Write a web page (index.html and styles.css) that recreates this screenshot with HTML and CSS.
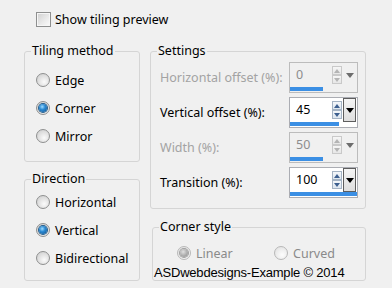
FILE: index.html
```html
<!DOCTYPE html>
<html lang="en">
<head>
    <meta charset="UTF-8">
    <title>Tiling</title>
    <link rel="stylesheet" href="styles.css">
</head>
<body>
    <div class="dialog">
        <div class="check-row"><span class="checkbox"></span>Show tiling preview</div>
        <div class="columns">
            <div class="col col-left">
                <div class="group group-tiling">
                    <div class="group-title">Tiling method</div>
                    <div class="radio-list">
                        <div class="radio-row"><span class="radio"></span>Edge</div>
                        <div class="radio-row"><span class="radio checked"></span>Corner</div>
                        <div class="radio-row"><span class="radio"></span>Mirror</div>
                    </div>
                </div>
                <div class="group group-direction">
                    <div class="group-title">Direction</div>
                    <div class="radio-list">
                        <div class="radio-row"><span class="radio"></span>Horizontal</div>
                        <div class="radio-row"><span class="radio checked"></span>Vertical</div>
                        <div class="radio-row"><span class="radio"></span>Bidirectional</div>
                    </div>
                </div>
            </div>
            <div class="col col-right">
                <div class="group group-settings">
                    <div class="group-title">Settings</div>
                    <div class="setting-list">
                        <div class="setting disabled">
                            <span class="setting-label">Horizontal offset (%):</span>
                            <div class="spin">
                                <div class="spin-top">
                                    <span class="spin-value">0</span>
                                    <span class="spin-arrows"><span class="arrow up"></span><span class="arrow down"></span></span>
                                    <span class="spin-drop"></span>
                                </div>
                                <div class="spin-bar"><div class="spin-fill" style="width: 33px"></div></div>
                            </div>
                        </div>
                        <div class="setting">
                            <span class="setting-label">Vertical offset (%):</span>
                            <div class="spin">
                                <div class="spin-top">
                                    <span class="spin-value">45</span>
                                    <span class="spin-arrows"><span class="arrow up"></span><span class="arrow down"></span></span>
                                    <span class="spin-drop"></span>
                                </div>
                                <div class="spin-bar"><div class="spin-fill" style="width: 49px"></div></div>
                            </div>
                        </div>
                        <div class="setting disabled">
                            <span class="setting-label">Width (%):</span>
                            <div class="spin">
                                <div class="spin-top">
                                    <span class="spin-value">50</span>
                                    <span class="spin-arrows"><span class="arrow up"></span><span class="arrow down"></span></span>
                                    <span class="spin-drop"></span>
                                </div>
                                <div class="spin-bar"><div class="spin-fill" style="width: 33px"></div></div>
                            </div>
                        </div>
                        <div class="setting">
                            <span class="setting-label">Transition (%):</span>
                            <div class="spin">
                                <div class="spin-top">
                                    <span class="spin-value">100</span>
                                    <span class="spin-arrows"><span class="arrow up"></span><span class="arrow down"></span></span>
                                    <span class="spin-drop"></span>
                                </div>
                                <div class="spin-bar"><div class="spin-fill" style="width: 100%"></div></div>
                            </div>
                        </div>
                    </div>
                </div>
                <div class="group group-corner">
                    <div class="group-title">Corner style</div>
                    <div class="corner-options">
                        <div class="radio-row disabled linear"><span class="radio checked"></span>Linear</div>
                        <div class="radio-row disabled"><span class="radio"></span>Curved</div>
                    </div>
                    <div class="credit">ASDwebdesigns-Example &copy; 2014</div>
                </div>
            </div>
        </div>
    </div>
</body>
</html>
```

FILE: styles.css
```css
html, body {
    margin: 0;
    padding: 0;
    background-color: #f0f0f0;
}

body {
    font-family: "Noto Sans", "DejaVu Sans", sans-serif;
    font-size: 12.5px;
    color: #000;
}

.dialog {
    width: 392px;
    height: 288px;
    box-sizing: border-box;
    padding: 12px 0 0 24px;
}

/* checkbox on top */
.check-row {
    display: flex;
    align-items: center;
    height: 15px;
    line-height: 15px;
    margin-left: 12px;
}

.checkbox {
    width: 15px;
    height: 15px;
    box-sizing: border-box;
    margin-right: 4px;
    border: 1px solid #8e8f8f;
    background: linear-gradient(135deg, #cfcfcf 0%, #e9e9e9 55%, #fbfbfb 100%);
    box-shadow: inset 0 0 0 1px #f6f6f6;
}

.columns {
    display: flex;
    gap: 10px;
    margin-top: 24px;
}

.col-left {
    width: 116px;
}

.col-right {
    width: 216px;
}

/* group boxes */
.group {
    box-sizing: border-box;
    border: 1px solid #d5d5d5;
    border-radius: 3px;
}

.group-title {
    width: fit-content;
    margin: -9px 0 0 6px;
    padding: 0 1px;
    line-height: 16px;
    background-color: #f0f0f0;
}

.group-tiling {
    height: 111px;
}

.group-tiling .radio-list {
    margin-top: 7px;
}

.group-direction {
    height: 102px;
    margin-top: 17px;
}

.group-direction .radio-list {
    margin-top: 1px;
}

.radio-row {
    display: flex;
    align-items: center;
    height: 28px;
    padding-left: 11px;
}

.radio {
    width: 14px;
    height: 14px;
    box-sizing: border-box;
    margin-right: 5px;
    border-radius: 50%;
    border: 1px solid #8e8f8f;
    background: radial-gradient(circle at 60% 65%, #fbfbfb 0%, #e4e4e4 45%, #c9c9c9 100%);
    display: inline-flex;
    align-items: center;
    justify-content: center;
}

.radio.checked::after {
    content: "";
    width: 8px;
    height: 8px;
    border-radius: 50%;
    background: radial-gradient(circle at 40% 35%, #9fdcff 0%, #2b8ad3 40%, #0d4f8b 100%);
    box-shadow: 0 0 0 1px #235d8c;
}

/* settings */
.group-settings {
    height: 158px;
}

.setting-list {
    display: flex;
    flex-direction: column;
    gap: 4px;
    margin-top: 3px;
    padding: 0 7px 0 9px;
}

.setting {
    display: flex;
    align-items: center;
    justify-content: space-between;
    height: 31px;
}

.setting.disabled .setting-label {
    color: #a3a3a3;
}

.spin {
    width: 69px;
    height: 31px;
    box-sizing: border-box;
    border: 1px solid #abadb3;
    background-color: #fff;
    display: flex;
    flex-direction: column;
}

.spin-top {
    display: flex;
    height: 24px;
}

.spin-value {
    flex: 1;
    padding: 2px 0 0 6px;
    line-height: 20px;
}

.spin-arrows {
    display: flex;
    flex-direction: column;
    width: 10px;
    padding-top: 3px;
    margin-right: 1px;
}

.arrow {
    height: 9px;
    box-sizing: border-box;
    border: 1px solid #a4b3c4;
    background: linear-gradient(#f4f7fa, #dde6ef);
    display: flex;
    align-items: center;
    justify-content: center;
}

.arrow.up::after {
    content: "";
    border-left: 3px solid transparent;
    border-right: 3px solid transparent;
    border-bottom: 4px solid #3d5f8f;
}

.arrow.down::after {
    content: "";
    border-left: 3px solid transparent;
    border-right: 3px solid transparent;
    border-top: 4px solid #3d5f8f;
}

.spin-drop {
    width: 13px;
    box-sizing: border-box;
    margin-right: 1px;
    border: 1px solid #5e5e5e;
    background: linear-gradient(#f5f5f5, #dedede);
    display: flex;
    align-items: center;
    justify-content: center;
}

.spin-drop::after {
    content: "";
    border-left: 4px solid transparent;
    border-right: 4px solid transparent;
    border-top: 5px solid #000;
}

.spin-bar {
    height: 4px;
    margin-bottom: 1px;
}

.spin-fill {
    height: 100%;
    background-color: #3b8fe4;
}

.setting.disabled .spin {
    background-color: #f0f0f0;
    border-color: #bcbcbc;
}

.setting.disabled .spin-value {
    color: #8d8d8d;
}

.setting.disabled .arrow {
    border-color: #c9c9c9;
    background: linear-gradient(#f6f6f6, #e6e6e6);
}

.setting.disabled .arrow.up::after {
    border-bottom-color: #b4b4b4;
}

.setting.disabled .arrow.down::after {
    border-top-color: #b4b4b4;
}

.setting.disabled .spin-drop {
    border-color: transparent;
    background: none;
}

.setting.disabled .spin-drop::after {
    border-top-color: #6d6d6d;
}

/* corner style */
.group-corner {
    height: 54px;
    margin: 18px 0 0 2px;
}

.corner-options {
    display: flex;
    margin-top: 10px;
}

.corner-options .radio-row {
    height: 16px;
    padding-left: 0;
}

.corner-options .linear {
    width: 97px;
    margin-left: 24px;
}

.radio-row.disabled {
    color: #8a8a8a;
}

.radio-row.disabled .radio {
    border-color: #b8b8b8;
    background: radial-gradient(circle at 60% 65%, #fdfdfd 0%, #eeeeee 50%, #dcdcdc 100%);
}

.radio-row.disabled .radio.checked::after {
    background: radial-gradient(circle at 40% 35%, #e0e0e0 0%, #a8a8a8 60%, #9a9a9a 100%);
    box-shadow: 0 0 0 1px #a0a0a0;
}

.credit {
    margin-top: 4px;
    padding-left: 1px;
    font-family: "Liberation Sans", Arial, sans-serif;
    font-size: 13px;
    letter-spacing: -0.2px;
    line-height: 15px;
}
```
